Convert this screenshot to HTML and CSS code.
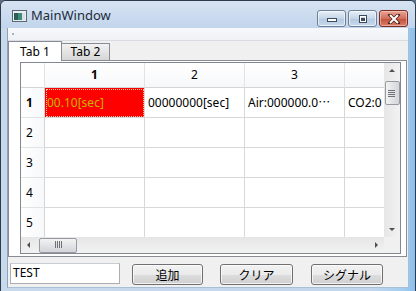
FILE: index.html
```html
<!DOCTYPE html>
<html lang="ja">
<head>
    <meta charset="UTF-8">
    <title>MainWindow</title>
    <link rel="stylesheet" href="styles.css">
</head>
<body>
    <div class="window">
        <!-- Title bar -->
        <div class="titlebar">
            <svg class="app-icon" width="15" height="12" viewBox="0 0 15 12">
                <rect x="0.5" y="0.5" width="14" height="11" fill="#e8eef2" stroke="#5a6670"/>
                <rect x="2" y="3" width="8" height="7" fill="#3f8a78"/>
                <rect x="2" y="3" width="4" height="7" fill="#2b5f57"/>
                <rect x="10" y="3" width="3" height="7" fill="#d8e2e6"/>
            </svg>
            <span class="title">MainWindow</span>
            <div class="caption-buttons">
                <div class="cbtn">
                    <svg width="12" height="6" viewBox="0 0 12 6"><rect x="1.5" y="2.5" width="9" height="3" fill="#fff" stroke="#3b4a5c"/></svg>
                </div>
                <div class="cbtn">
                    <svg width="12" height="10" viewBox="0 0 12 10"><rect x="2.5" y="1.5" width="7" height="7" fill="none" stroke="#3b4a5c"/><rect x="3.5" y="2.5" width="5" height="5" fill="none" stroke="#fff"/><rect x="4" y="4" width="4" height="3" fill="#3b4a5c"/></svg>
                </div>
                <div class="cbtn close">
                    <svg width="14" height="10" viewBox="0 0 14 10"><path d="M3 1 L11 9 M11 1 L3 9" stroke="#4a1a14" stroke-width="3.4" stroke-linecap="square"/><path d="M3 1 L11 9 M11 1 L3 9" stroke="#fff" stroke-width="2"/></svg>
                </div>
            </div>
        </div>

        <div class="client">
            <div class="menubar"><span class="handle"></span></div>

            <div class="tabbar">
                <div class="tab active">Tab 1</div>
                <div class="tab">Tab 2</div>
            </div>

            <div class="pane">
                <div class="table">
                    <div class="table-main">
                        <div class="viewport">
                            <div class="grid">
                                <div class="corner"></div>
                                <div class="hcell bold">1</div>
                                <div class="hcell">2</div>
                                <div class="hcell">3</div>
                                <div class="hcell"></div>

                                <div class="rcell bold">1</div>
                                <div class="cell current">00.10[sec]</div>
                                <div class="cell">00000000[sec]</div>
                                <div class="cell">Air:000000.0&#x22EF;</div>
                                <div class="cell">CO2:0</div>

                                <div class="rcell">2</div>
                                <div class="cell"></div><div class="cell"></div><div class="cell"></div><div class="cell"></div>
                                <div class="rcell">3</div>
                                <div class="cell"></div><div class="cell"></div><div class="cell"></div><div class="cell"></div>
                                <div class="rcell">4</div>
                                <div class="cell"></div><div class="cell"></div><div class="cell"></div><div class="cell"></div>
                                <div class="rcell">5</div>
                                <div class="cell"></div><div class="cell"></div><div class="cell"></div><div class="cell"></div>
                            </div>
                        </div>
                        <div class="vscroll">
                            <svg class="arrow" width="16" height="16" viewBox="0 0 16 16"><path d="M5 9 L8 6 L11 9 Z" fill="#505050"/></svg>
                            <div class="vthumb">
                                <svg width="8" height="7" viewBox="0 0 8 7"><path d="M0 0.5 H7 M0 2.5 H7 M0 4.5 H7 M0 6.5 H7" stroke="#6d7278"/></svg>
                            </div>
                            <div class="track"></div>
                            <svg class="arrow" width="16" height="16" viewBox="0 0 16 16"><path d="M5 7 L8 10 L11 7 Z" fill="#505050"/></svg>
                        </div>
                    </div>
                    <div class="table-foot">
                        <div class="hscroll">
                            <svg class="arrow" width="16" height="16" viewBox="0 0 16 16"><path d="M9 5 L6 8 L9 11 Z" fill="#505050"/></svg>
                            <div class="hthumb">
                                <svg width="7" height="8" viewBox="0 0 7 8"><path d="M0.5 0 V7 M2.5 0 V7 M4.5 0 V7 M6.5 0 V7" stroke="#6d7278"/></svg>
                            </div>
                            <div class="track"></div>
                            <svg class="arrow" width="16" height="16" viewBox="0 0 16 16"><path d="M7 5 L10 8 L7 11 Z" fill="#505050"/></svg>
                        </div>
                        <div class="scroll-corner"></div>
                    </div>
                </div>
            </div>

            <div class="controls">
                <div class="field">TEST</div>
                <button class="btn b1">追加</button>
                <button class="btn b2">クリア</button>
                <button class="btn b3">シグナル</button>
            </div>
        </div>
    </div>
</body>
</html>
```

FILE: styles.css
```css
body {
    margin: 0;
    width: 416px;
    height: 291px;
    overflow: hidden;
    background: #5b6f86;
    font-family: "Noto Sans", "Noto Sans CJK JP", sans-serif;
    font-size: 12px;
    color: #000;
}
.window {
    width: 416px;
    height: 300px;
    box-sizing: border-box;
    border: 1px solid #2f3b4a;
    border-radius: 6px 6px 0 0;
    background: linear-gradient(to right, #c9d9ec 0%, #c2d6ed 90%, #a4cdf0 97%, #8cc0ec 100%);
    padding: 0 6px 0 6px;
}
.titlebar {
    height: 27px;
    display: flex;
    align-items: center;
    background: linear-gradient(#d6e3f2, #c2d5ec);
    margin: 0 -6px;
    padding: 0 6px;
    border-radius: 5px 5px 0 0;
}
.app-icon {
    margin-left: 5px;
    margin-top: 2px;
}
.title {
    margin-left: 4px;
    margin-top: 1px;
    font-size: 13px;
    color: #1c2a3a;
}
.caption-buttons {
    margin-left: auto;
    margin-right: 1px;
    align-self: flex-start;
    margin-top: 9px;
    display: flex;
    gap: 2px;
}
.cbtn {
    width: 27px;
    height: 15px;
    border: 1px solid #6c7f97;
    border-radius: 3px;
    background: linear-gradient(#e9f0f8, #c5d5e8 50%, #b3c7df 51%, #c9dbee);
    display: flex;
    align-items: center;
    justify-content: center;
    box-shadow: inset 0 0 0 1px rgba(255, 255, 255, 0.6);
}
.cbtn.close {
    width: 27px;
    border-color: #7a2a20;
    background: linear-gradient(#e8a593, #d0705c 50%, #c24e38 51%, #d6806a);
    box-shadow: inset 0 0 0 1px rgba(255, 220, 210, 0.5);
}
.client {
    box-sizing: border-box;
    height: 260px;
    background: #f0f0f0;
    border-left: 1px solid #8ea2ba;
    border-right: 1px solid #a9bfd8;
    border-bottom: 1px solid #a9bfd8;
}
.menubar {
    height: 12px;
    border-bottom: 1px solid #d9dde3;
    background: linear-gradient(#f7f9fc, #eef1f5);
    position: relative;
}
.handle {
    position: absolute;
    left: 4px;
    top: 5px;
    width: 2px;
    height: 2px;
    background: #a8b0ba;
}
.tabbar {
    height: 19px;
    display: flex;
    align-items: flex-end;
    position: relative;
    z-index: 1;
}
.tab {
    box-sizing: border-box;
    height: 17px;
    width: 48px;
    border: 1px solid #898c95;
    border-bottom: none;
    border-left: none;
    background: linear-gradient(#f2f2f2, #e4e4e4 50%, #d6d6d6);
    text-align: center;
    line-height: 16px;
    font-size: 12px;
}
.tab.active {
    width: 54px;
    height: 20px;
    margin-bottom: -1px;
    border-left: 1px solid #898c95;
    background: #fff;
    line-height: 19px;
    padding-bottom: 1px;
}
.pane {
    box-sizing: border-box;
    height: 197px;
    margin-right: 1px;
    border: 1px solid #898c95;
    background: #fff;
    padding: 1px 5px 2px 11px;
}
.table {
    border: 1px solid #828790;
    display: flex;
    flex-direction: column;
    width: 379px;
}
.table-main {
    display: flex;
    height: 174px;
}
.viewport {
    width: 363px;
    height: 174px;
    overflow: hidden;
}
.grid {
    display: grid;
    grid-template-columns: 24px 100px 100px 100px 100px;
    grid-template-rows: 25px repeat(5, 30px);
}
.grid > div {
    box-sizing: border-box;
    white-space: nowrap;
    overflow: hidden;
}
.corner {
    background: #fff;
    border-right: 1px solid #e3e3e3;
    border-bottom: 1px solid #d5d5d5;
}
.hcell {
    background: linear-gradient(#ffffff, #f7f8fa);
    border-right: 1px solid #e3e3e3;
    border-bottom: 1px solid #d5d5d5;
    text-align: center;
    line-height: 24px;
}
.rcell {
    background: linear-gradient(to right, #ffffff, #f7f8fa);
    border-right: 1px solid #d5d5d5;
    border-bottom: 1px solid #e3e3e3;
    padding-left: 5px;
    line-height: 29px;
}
.bold {
    font-weight: bold;
}
.cell {
    border-right: 1px solid #d8d8d8;
    border-bottom: 1px solid #d8d8d8;
    padding-left: 3px;
    line-height: 29px;
}
.cell.current {
    background: #ff0000;
    color: #c8b400;
    outline: 1px dotted #f4c0a0;
    outline-offset: -2px;
    padding-left: 2px;
}
.vscroll {
    width: 16px;
    display: flex;
    flex-direction: column;
    align-items: center;
    background: linear-gradient(to right, #e6e6e6, #f2f2f2);
}
.vscroll .arrow, .hscroll .arrow {
    flex: none;
}
.vthumb {
    box-sizing: border-box;
    width: 15px;
    height: 24px;
    margin-top: 2px;
    border: 1px solid #979aa0;
    border-radius: 2px;
    background: linear-gradient(to right, #f3f3f3, #e2e3e6 50%, #d3d5d9);
    display: flex;
    align-items: center;
    justify-content: center;
}
.track {
    flex: 1;
}
.table-foot {
    display: flex;
    height: 16px;
}
.hscroll {
    width: 363px;
    display: flex;
    align-items: center;
    background: linear-gradient(#e6e6e6, #f2f2f2);
}
.hthumb {
    box-sizing: border-box;
    width: 38px;
    height: 15px;
    margin-left: 2px;
    border: 1px solid #979aa0;
    border-radius: 2px;
    background: linear-gradient(#f3f3f3, #e2e3e6 50%, #d3d5d9);
    display: flex;
    align-items: center;
    justify-content: center;
}
.scroll-corner {
    width: 16px;
    background: #f0f0f0;
}
.controls {
    display: flex;
    align-items: flex-start;
    padding: 5px 0 0 2px;
}
.field {
    box-sizing: border-box;
    width: 110px;
    height: 21px;
    border: 1px solid #abadb3;
    border-top-color: #c9ccd2;
    background: #fff;
    padding-left: 2px;
    line-height: 18px;
    margin-right: 12px;
    margin-top: 1px;
}
.btn {
    box-sizing: border-box;
    height: 21px;
    margin-top: 2px;
    border: 1px solid #707070;
    border-radius: 3px;
    background: linear-gradient(#f2f2f2, #ebebeb 50%, #dddddd 51%, #cfcfcf);
    box-shadow: inset 0 0 0 1px rgba(255, 255, 255, 0.7);
    font-family: "Noto Sans CJK JP", sans-serif;
    font-size: 12px;
    padding: 0;
    line-height: 18px;
}
.b1 {
    width: 71px;
}
.b2 {
    width: 73px;
    margin-left: 17px;
}
.b3 {
    width: 72px;
    margin-left: 18px;
}
```
